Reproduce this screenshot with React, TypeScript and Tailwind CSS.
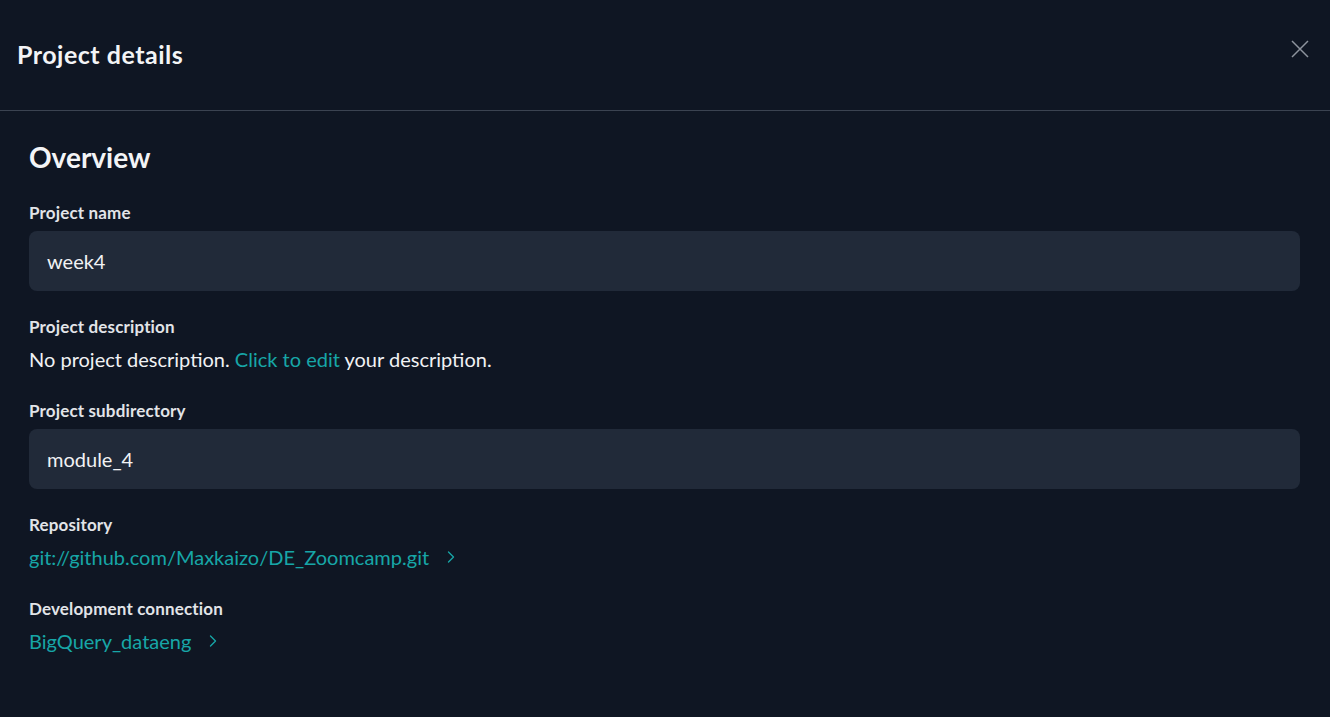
import React from "react";

const Chevron = () => (
  <svg width="20" height="20" viewBox="0 0 24 24" fill="none" stroke="currentColor" strokeWidth="1.6" strokeLinecap="round" strokeLinejoin="round" className="ml-[12px] shrink-0">
    <path d="m9 18 6-6-6-6" />
  </svg>
);

const Label = ({ children, mt }: { children: React.ReactNode; mt: string }) => (
  <div className={`${mt} text-[17px] leading-[24px] tracking-[0.15px] font-bold text-[#e2e4e8]`}>{children}</div>
);

export default function App() {
  return (
    <div className="w-[1330px] h-[717px] bg-[#0f1623] text-[#f1f2f4] overflow-hidden" style={{ fontFamily: "Lato, 'Noto Sans', sans-serif" }}>
      <div className="h-[111px] flex items-center justify-between pl-[17px] pr-[21px] border-b border-[#3b4351]">
        <div className="mb-[3px] text-[25px] leading-[32px] tracking-[0.5px] font-bold text-[#f3f4f6]">Project details</div>
        <button className="mb-[12px] text-[#8d939d]">
          <svg width="18" height="18" viewBox="0 0 18 18" fill="none" stroke="currentColor" strokeWidth="1.5">
            <path d="M1 1 17 17M17 1 1 17" />
          </svg>
        </button>
      </div>
      <div className="pl-[29px] pr-[30px] pt-[28px] flex flex-col">
        <div className="text-[28px] leading-[36px] font-bold text-[#f3f4f6]">Overview</div>
        <Label mt="mt-[26px]">Project name</Label>
        <div className="mt-[6px] h-[60px] rounded-lg bg-[#212a39] px-[18px] flex items-center text-[20px]">week4</div>
        <Label mt="mt-[24px]">Project description</Label>
        <div className="mt-[6px] text-[20px] leading-[28px]">
          No project description. <span className="text-[#17a6a7]">Click to edit</span> your description.
        </div>
        <Label mt="mt-[26px]">Project subdirectory</Label>
        <div className="mt-[6px] h-[60px] rounded-lg bg-[#212a39] px-[18px] flex items-center text-[20px]">module_4</div>
        <Label mt="mt-[24px]">Repository</Label>
        <div className="mt-[6px] text-[20px] leading-[28px] text-[#17a6a7] flex items-center">
          <span>git://github.com/Maxkaizo/DE_Zoomcamp.git</span>
          <Chevron />
        </div>
        <Label mt="mt-[26px]">Development connection</Label>
        <div className="mt-[6px] text-[20px] leading-[28px] text-[#17a6a7] flex items-center">
          <span>BigQuery_dataeng</span>
          <Chevron />
        </div>
      </div>
    </div>
  );
}
